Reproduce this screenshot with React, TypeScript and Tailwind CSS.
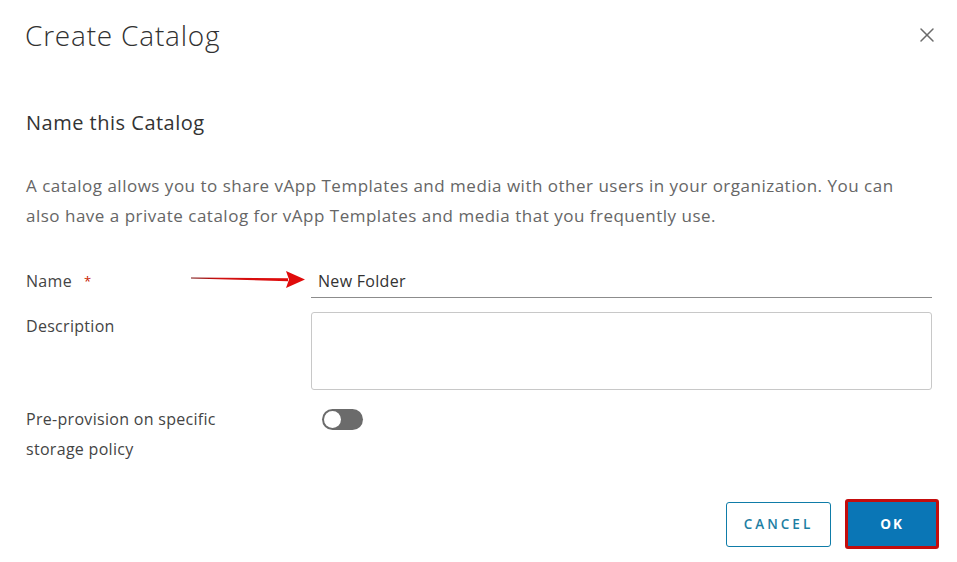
import { X } from "lucide-react";

const font = { fontFamily: '"Open Sans", "Liberation Sans", sans-serif' };

const Arrow = () => (
  <svg
    className="absolute left-[-121px] top-[3px]"
    width="118"
    height="20"
    viewBox="0 0 118 20"
  >
    <defs>
      <linearGradient id="shaft" x1="0" x2="1" y1="0" y2="0">
        <stop offset="0" stopColor="#7a1010" />
        <stop offset="0.3" stopColor="#d01010" />
        <stop offset="1" stopColor="#e00b0b" />
      </linearGradient>
    </defs>
    <path d="M1 8.6 L98 9.2 L98 12.2 L1 9.4 Z" fill="url(#shaft)" />
    <path d="M96 2 L115 10.5 L96 19 L99 10.5 Z" fill="#e00b0b" />
  </svg>
);

export default function App() {
  return (
    <div className="w-[957px] h-[562px] bg-white overflow-hidden" style={font}>
      <div className="flex items-center justify-between pl-[25px] pr-[18px] pt-[17px]">
        <h1 className="text-[28px] leading-[36px] font-light text-[#313131] tracking-[0.8px]">
          Create Catalog
        </h1>
        <button className="text-[#6b6b6b]">
          <X size={24} strokeWidth={1.5} />
        </button>
      </div>

      <div className="pl-[26px] pr-[25px]">
        <h2 className="mt-[57px] text-[20px] leading-[26px] text-[#333] tracking-[0.5px]">
          Name this Catalog
        </h2>

        <p className="mt-[35px] text-[17px] leading-[30px] text-[#666] tracking-[0.5px]">
          A catalog allows you to share vApp Templates and media with other users in your organization. You can also have a private catalog for vApp Templates and media that you frequently use.
        </p>

        <div className="mt-[35px] grid grid-cols-[285px_1fr] text-[16px] leading-[30px] text-[#444] tracking-[0.3px]">
          <div className="flex h-[32px]">
            <span>Name</span>
            <span className="ml-[12px] text-[13px] text-[#c92100]">*</span>
          </div>
          <div className="relative h-[32px] border-b border-[#8c8c8c] pl-[7px] text-[#333]">
            <Arrow />
            New Folder
          </div>

          <div className="mt-[13px]">Description</div>
          <div className="mt-[14px] h-[78px] rounded-[3px] border border-[#c8c8c8]" />

          <div className="mt-[14px]">
            Pre-provision on specific
            <br />
            storage policy
          </div>
          <div className="mt-[19px] pl-[11px]">
            <div className="flex h-[21px] w-[41px] items-center rounded-full bg-[#6b6b6b] px-[2px]">
              <div className="h-[17px] w-[17px] rounded-full bg-white" />
            </div>
          </div>
        </div>

        <div className="mt-[35px] flex items-center justify-end gap-[14px]">
          <button className="h-[45px] w-[105px] rounded-[3px] border border-[#0f7ca8] text-[13.5px] font-semibold tracking-[3px] text-[#1d7ea3]">
            CANCEL
          </button>
          <div className="-mr-[7px] rounded-[3px] border-[3px] border-[#c40d0d]">
            <button className="h-[44px] w-[88px] bg-[#0a76b6] text-[13.5px] font-bold tracking-[2px] text-white">
              OK
            </button>
          </div>
        </div>
      </div>
    </div>
  );
}
